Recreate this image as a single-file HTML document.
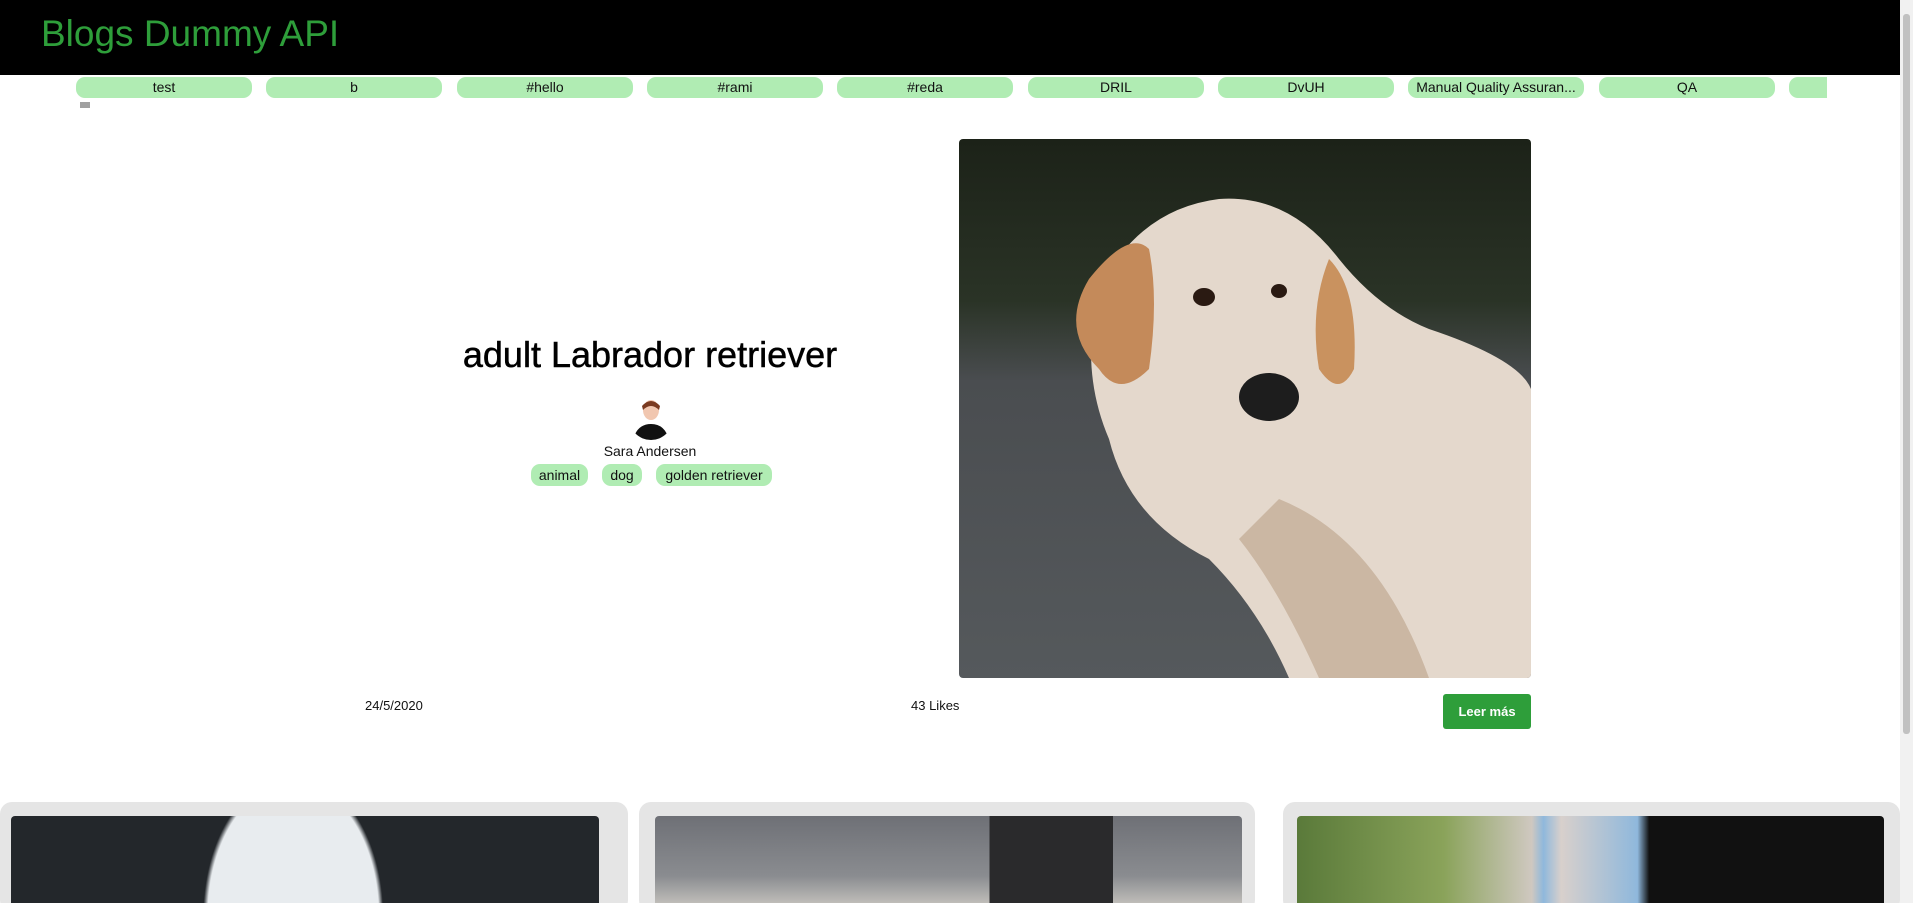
<!DOCTYPE html>
<html><head><meta charset="utf-8"><style>
*{margin:0;padding:0;box-sizing:border-box}
html,body{width:1913px;height:903px;overflow:hidden}
body{background:#fff;font-family:"Liberation Sans",sans-serif;position:relative;color:#111}
.hdr{position:absolute;left:0;top:0;width:1900px;height:75px;background:#000}
.hdr h1{position:absolute;left:41px;top:13px;font-size:37px;font-weight:normal;color:#2e9e3a}
.tags{position:absolute;top:77px;left:76px;width:1751px;height:21px;overflow:hidden;white-space:nowrap}
.tag{position:absolute;top:0;width:176px;height:21px;background:#b0ecb3;border-radius:9px;font-size:14px;text-align:center;line-height:21px;overflow:hidden}
.sb{position:absolute;top:101px;left:74px;width:1754px;height:8px}
.sb .th{position:absolute;left:6px;top:1px;width:10px;height:6px;background:#a0a0a0}
.vs{position:absolute;right:0;top:0;width:13px;height:903px;background:#f1f1f1}
.vs .th{position:absolute;left:3px;top:14px;width:7px;height:720px;background:#c1c1c1;border-radius:3px}
h2{position:absolute;left:350px;width:600px;text-align:center;top:334px;font-size:36px;font-weight:normal;color:#000;-webkit-text-stroke:0.5px #000}
.av{position:absolute;left:629px;top:396px;width:44px;height:44px;border-radius:50%;overflow:hidden;background:#fff}
.name{position:absolute;left:400px;width:500px;text-align:center;top:443px;font-size:14px}
.pt{position:absolute;top:464px;height:22px;background:#b0ecb3;border-radius:9px;font-size:14px;line-height:22px;text-align:center}
.img{position:absolute;left:959px;top:139px;width:572px;height:539px;border-radius:4px;overflow:hidden;background:linear-gradient(180deg,#1c2218 0%,#2a3326 30%,#4a4d50 45%,#55595c 100%)}
.meta{position:absolute;top:698px;font-size:13px}
.btn{position:absolute;left:1443px;top:694px;width:88px;height:35px;background:#2e9e3a;border-radius:3px;color:#fff;font-weight:bold;font-size:13px;text-align:center;line-height:35px}
.card{position:absolute;top:802px;height:110px;background:#e5e5e5;border-radius:12px}
.ci{position:absolute;top:14px;height:100px;border-radius:4px;overflow:hidden}
</style></head><body>
<div class="hdr"><h1>Blogs Dummy API</h1></div>
<div class="tags">
<div class="tag" style="left:0">test</div>
<div class="tag" style="left:190px">b</div>
<div class="tag" style="left:381px">#hello</div>
<div class="tag" style="left:571px">#rami</div>
<div class="tag" style="left:761px">#reda</div>
<div class="tag" style="left:952px">DRIL</div>
<div class="tag" style="left:1142px">DvUH</div>
<div class="tag" style="left:1332px">Manual Quality Assuran...</div>
<div class="tag" style="left:1523px">QA</div>
<div class="tag" style="left:1713px"></div>
</div>
<div class="sb"><div class="th"></div></div>
<div class="vs"><div class="th"></div></div>
<h2>adult Labrador retriever</h2>
<div class="av"><svg width="44" height="44"><ellipse cx="22" cy="14" rx="8" ry="10" fill="#f1c7b0"/><path d="M13 10 Q22 0 31 10 L30 14 Q22 6 14 14Z" fill="#7a3a20"/><path d="M4 44 Q8 28 22 28 Q36 28 40 44Z" fill="#111"/></svg></div>
<div class="name">Sara Andersen</div>
<div class="pt" style="left:531px;width:57px">animal</div>
<div class="pt" style="left:602px;width:40px">dog</div>
<div class="pt" style="left:656px;width:116px">golden retriever</div>
<div class="img"><svg width="572" height="539">
<path d="M140 150 Q180 70 260 60 Q330 55 380 120 Q420 170 470 190 Q560 220 572 250 L572 539 L330 539 Q300 470 250 420 Q170 380 150 300 Q120 230 140 150Z" fill="#e4d8cc"/>
<path d="M130 140 Q170 90 190 110 Q200 160 190 230 Q160 260 140 230 Q100 190 130 140Z" fill="#c48a5a"/>
<path d="M370 120 Q400 150 395 230 Q380 260 360 230 Q350 170 370 120Z" fill="#c9925f"/>
<path d="M320 360 Q420 400 470 539 L360 539 Q320 450 280 400Z" fill="#cbb7a3"/>
<ellipse cx="245" cy="158" rx="11" ry="9" fill="#2a1a12"/>
<ellipse cx="320" cy="152" rx="8" ry="7" fill="#2a1a12"/>
<ellipse cx="310" cy="258" rx="30" ry="24" fill="#1d1d1d"/>
</svg></div>
<div class="meta" style="left:365px">24/5/2020</div>
<div class="meta" style="left:911px">43 Likes</div>
<div class="btn">Leer más</div>
<div class="card" style="left:0;width:628px"><div class="ci" style="left:11px;width:588px;background:radial-gradient(ellipse 90px 140px at 48% 100%,#e8ecef 0 95%,transparent 100%),#23272b"></div></div>
<div class="card" style="left:639px;width:616px"><div class="ci" style="left:16px;width:587px;background:linear-gradient(90deg,transparent 0 57%,#2a2a2c 57% 78%,transparent 78%),linear-gradient(180deg,#6e7076,#8a8c90 60%,#d8d4cc)"></div></div>
<div class="card" style="left:1283px;width:617px"><div class="ci" style="left:14px;width:587px;background:linear-gradient(90deg,#5a7a3a 0,#8aa35a 25%,#cfc8c0 40%,#8fb8dc 42%,#d8d0cc 45%,#8fb8dc 58%,#111 60%,#111 100%)"></div></div>
</body></html>
